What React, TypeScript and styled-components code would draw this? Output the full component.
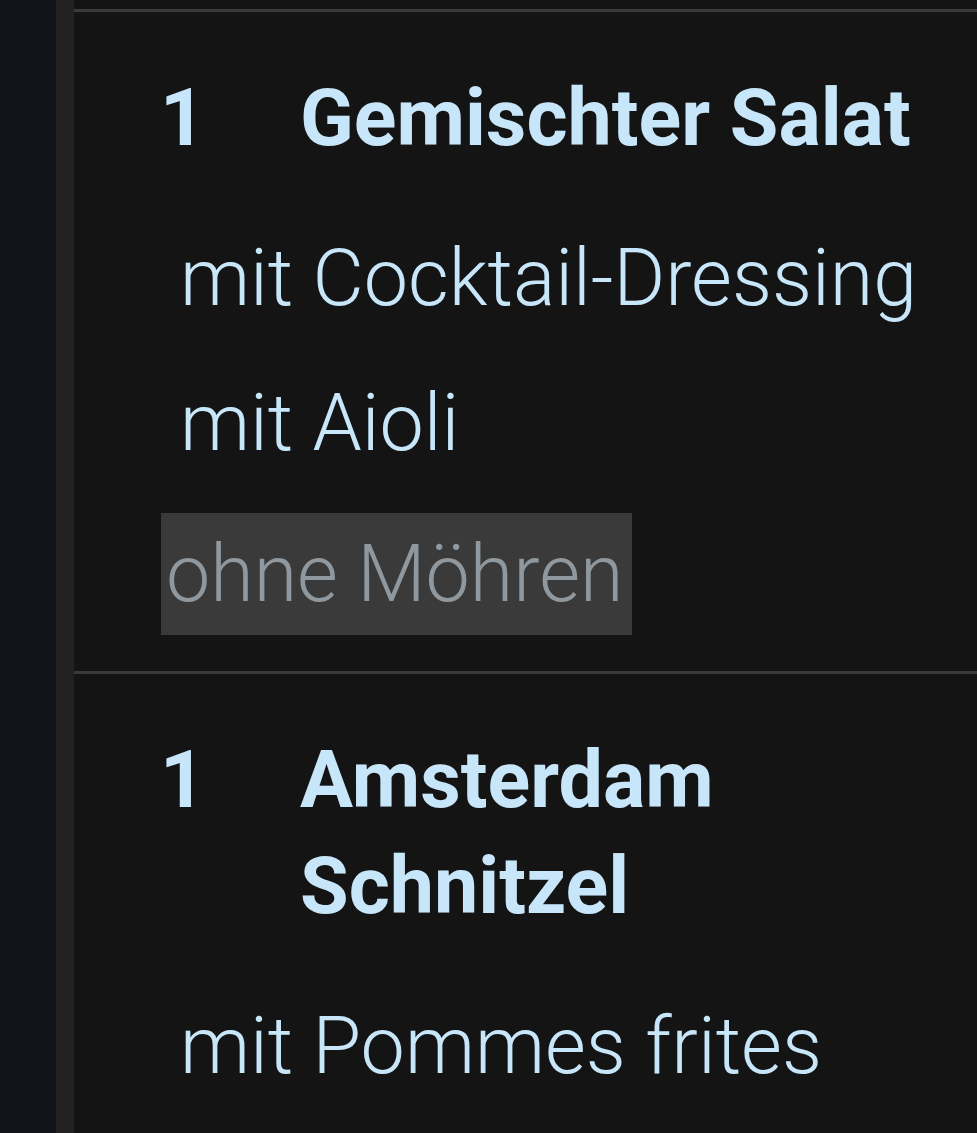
import styled, { createGlobalStyle } from "styled-components";

const SIDE = "#12141a";
const STRIP = "#242220";
const PANEL = "#141414";
const LINE = "#3a3a3a";
const TEXT = "#c8e6f9";
const MUTED = "#8e989e";
const MUTED_BG = "#3a3a3a";

type Modifier = { text: string; removed?: boolean };
type OrderItem = { qty: number; name: string; modifiers: Modifier[] };

const ITEMS: OrderItem[] = [
  {
    qty: 1,
    name: "Gemischter Salat",
    modifiers: [
      { text: "mit Cocktail-Dressing" },
      { text: "mit Aioli" },
      { text: "ohne Möhren", removed: true },
    ],
  },
  {
    qty: 1,
    name: "Amsterdam Schnitzel",
    modifiers: [{ text: "mit Pommes frites" }],
  },
];

const Global = createGlobalStyle`
  html, body {
    margin: 0;
    padding: 0;
    background: ${PANEL};
    overflow: hidden;
  }
  * { box-sizing: border-box; }
`;

const Screen = styled.div`
  width: 977px;
  height: 1133px;
  display: flex;
  overflow: hidden;
  font-family: Roboto, "Noto Sans", sans-serif;
`;

const Side = styled.div`
  width: 56px;
  flex-shrink: 0;
  background: ${SIDE};
`;

const Strip = styled.div`
  width: 18px;
  flex-shrink: 0;
  background: ${STRIP};
`;

const Ticket = styled.div`
  flex: 1;
  background: ${PANEL};
  padding-top: 9px;
`;

const Item = styled.section`
  border-top: 3px solid ${LINE};
  padding: 53px 40px 36px 0;
`;

const Head = styled.div`
  display: flex;
  align-items: flex-start;
  padding-left: 86px;
  font-size: 79px;
  font-weight: 700;
  line-height: 106px;
  color: ${TEXT};
`;

const Qty = styled.div`
  width: 140px;
  flex-shrink: 0;
`;

const Name = styled.div`
  flex: 1;
`;

const Mods = styled.ul`
  list-style: none;
  margin: 46px 0 0;
  padding: 0 0 0 87px;
  display: flex;
  flex-direction: column;
  gap: 23px;
`;

const Mod = styled.li<{ $removed?: boolean }>`
  align-self: flex-start;
  font-size: 79px;
  font-weight: 300;
  line-height: 122px;
  white-space: nowrap;
  color: ${(p) => (p.$removed ? MUTED : TEXT)};
  background: ${(p) => (p.$removed ? MUTED_BG : "transparent")};
  margin-top: ${(p) => (p.$removed ? "6px" : "0")};
  padding: ${(p) => (p.$removed ? "0 9px 0 5px" : "0 0 0 19px")};
`;

export default function App() {
  return (
    <>
      <Global />
      <Screen>
        <Side />
        <Strip />
        <Ticket>
          {ITEMS.map((item, i) => (
            <Item key={i}>
              <Head>
                <Qty>{item.qty}</Qty>
                <Name>{item.name}</Name>
              </Head>
              <Mods>
                {item.modifiers.map((m, j) => (
                  <Mod key={j} $removed={m.removed}>
                    {m.text}
                  </Mod>
                ))}
              </Mods>
            </Item>
          ))}
        </Ticket>
      </Screen>
    </>
  );
}
